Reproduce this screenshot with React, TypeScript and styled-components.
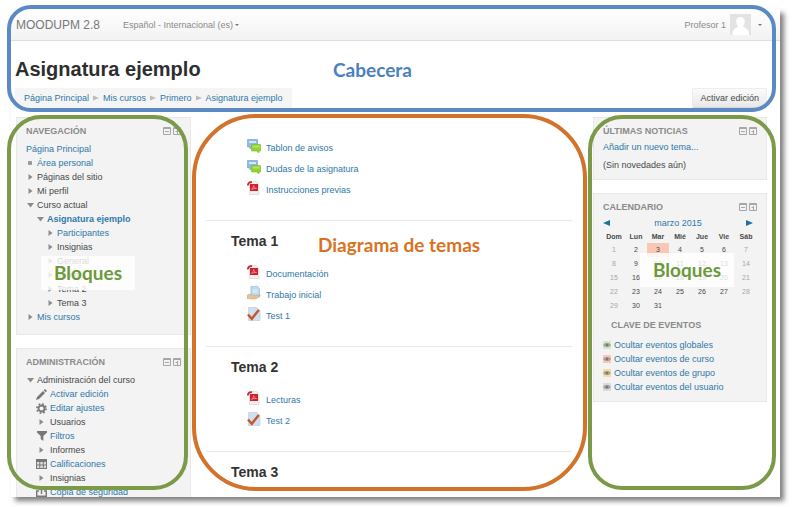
import React from "react";
import styled, { createGlobalStyle } from "styled-components";

const c = {
  link: "#2f78a8",
  text: "#484848",
  muted: "#8a8a8a",
  panel: "#f3f3f3",
  line: "#e8e8e8",
  blue: "#5b89c4",
  green: "#7a9a48",
  greenText: "#6b9a38",
  orange: "#d2722b",
};

const GlobalStyle = createGlobalStyle`
  *, *::before, *::after { box-sizing: border-box; }
  body {
    margin: 0;
    background: #fff;
    color: ${c.text};
    font: 9px/14px "Liberation Sans", Arial, sans-serif;
  }
  h1, h2, h3, p, ul, ol { margin: 0; padding: 0; }
  ul, ol { list-style: none; }
  a { color: ${c.link}; text-decoration: none; }
  button { font: inherit; color: inherit; border: 0; background: none; padding: 0; cursor: pointer; }
  svg { display: block; flex: none; }
`;

/* ---------- frame ---------- */

const Stage = styled.div`
  height: 100vh;
  padding: 9px 22px 10px 11px;
`;

const Frame = styled.div`
  position: relative;
  height: 100%;
  background: #fff;
  box-shadow: 4px 4px 5px rgba(0, 0, 0, 0.5);
`;

const Screen = styled.div`
  height: 100%;
  overflow: hidden;
`;

/* ---------- header ---------- */

const Navbar = styled.header`
  display: flex;
  align-items: center;
  gap: 23px;
  height: 32px;
  padding: 0 18px 0 5px;
  color: ${c.muted};
  background: linear-gradient(#fff, #f2f2f2);
  border-bottom: 1px solid #dedede;
`;

const Brand = styled.a`
  font-size: 12px;
  color: #777;
`;

const MenuButton = styled.button`
  display: flex;
  align-items: center;
  gap: 2px;
`;

const UserMenu = styled(MenuButton)`
  gap: 4px;
  margin-left: auto;
`;

const Caret = styled.span`
  border: 2px solid transparent;
  border-top-color: #777;
  border-bottom: 0;
  ${UserMenu} & { margin-left: 3px; }
`;

const PageHeader = styled.div`
  padding: 15px 13px 0 4px;
`;

const Title = styled.h1`
  font-size: 20px;
  line-height: 26px;
  color: #2e2e2e;
`;

const HeaderRow = styled.div`
  display: flex;
  align-items: center;
  justify-content: space-between;
  margin-top: 6px;
`;

const Crumbs = styled.ol`
  display: flex;
  gap: 4px;
  padding: 3px 9px;
  background: #f5f5f5;
`;

const Crumb = styled.li`
  display: flex;
  align-items: center;
  gap: 4px;
`;

const EditButton = styled.button`
  padding: 2px 7px;
  border: 1px solid #ededed;
  border-bottom-color: #d8d8d8;
  border-radius: 2px;
  background: linear-gradient(#fafafa, #e9e9e9);
`;

/* ---------- columns ---------- */

const Columns = styled.div`
  display: grid;
  grid-template-columns: 175px minmax(0, 1fr) 174px;
  gap: 15px 20px;
  padding: 9px 13px 0 5px;
`;

const Side = styled.aside`
  display: flex;
  flex-direction: column;
  gap: 13px;
  min-width: 0;
`;

const BlockBox = styled.section`
  padding: 6px 9px 7px;
  background: ${c.panel};
  border: 1px solid ${c.line};
`;

const BlockHead = styled.div`
  display: flex;
  align-items: center;
  justify-content: space-between;
  margin-bottom: 4px;
`;

const BlockTitle = styled.h2`
  font-size: 9px;
  line-height: 14px;
  color: ${c.muted};
  text-transform: uppercase;
`;

const Tools = styled.div`
  display: flex;
  gap: 2px;
`;

const TreeList = styled.ul`
  padding-bottom: 3px;
`;

const TreeRow = styled.li<{ $level: number; $bold?: boolean }>`
  display: flex;
  align-items: center;
  gap: 3px;
  height: 14px;
  padding-left: ${(p) => p.$level * 10}px;
  font-weight: ${(p) => (p.$bold ? "bold" : "normal")};
  white-space: nowrap;
`;

const Marker = styled.span<{ $wide?: boolean }>`
  display: flex;
  justify-content: center;
  width: ${(p) => (p.$wide ? 11 : 8)}px;
`;

const Main = styled.main`
  padding: 0 1px 0 0;
  margin-left: -5px;
`;

const Topic = styled.section`
  padding: 10px 25px 22px;
  border-bottom: 1px solid ${c.line};
`;

const TopicTitle = styled.h3`
  margin-bottom: 10px;
  font-size: 14px;
  line-height: 20px;
  color: #333;
`;

const Activities = styled.ul`
  padding-left: 16px;
  ${Topic}:first-child & { padding-top: 8px; }
`;

const Activity = styled.li`
  display: flex;
  align-items: center;
  height: 21px;
`;

const ActivityLink = styled.a`
  display: flex;
  align-items: center;
  gap: 5px;
`;

const ActivityName = styled.span`
  padding-top: 5px;
`;

/* ---------- news & calendar ---------- */

const News = styled.p`
  padding-top: 4px;
`;

const NewsLink = styled.a`
  display: block;
  margin-top: -2px;
`;

const MonthBar = styled.div`
  display: flex;
  align-items: center;
  justify-content: space-between;
  padding: 0 4px 0 0;
  margin-top: -2px;
`;

const CalendarTable = styled.table`
  width: 100%;
  table-layout: fixed;
  border-collapse: collapse;
  font-size: 7px;
  line-height: 14px;
  text-align: center;
`;

const DayName = styled.th`
  height: 13px;
  padding: 0;
  line-height: 12px;
`;

const Day = styled.td<{ $weekend: boolean; $today: boolean }>`
  height: 14px;
  padding: 0;
  color: ${(p) => (p.$weekend ? "#a6a6a6" : c.text)};
  background: ${(p) => (p.$today ? "#f9c8b4" : "transparent")};
`;

const KeyTitle = styled(BlockTitle)`
  margin: 5px 0 6px 8px;
`;

const KeyRow = styled.li`
  display: flex;
  align-items: center;
  gap: 3px;
`;

const KeyIcon = styled.span<{ $tone: string }>`
  display: flex;
  padding: 1px 0;
  background: ${(p) => p.$tone};
`;

/* ---------- annotations ---------- */

const Region = styled.div<{ $tone: string; $radius: number }>`
  position: absolute;
  border: 4px solid ${(p) => p.$tone};
  border-radius: ${(p) => p.$radius}px;
  pointer-events: none;
`;

const HeaderRegion = styled(Region)`
  top: -4px;
  left: -4px;
  right: 4px;
  height: 107px;
`;

const LeftRegion = styled(Region)`
  top: 106px;
  bottom: 7px;
  left: -4px;
  width: 181px;
`;

const MainRegion = styled(Region)`
  top: 105px;
  bottom: 6px;
  left: 181px;
  right: 193px;
`;

const RightRegion = styled(Region)`
  top: 106px;
  bottom: 7px;
  right: 4px;
  width: 188px;
`;

const Label = styled.span<{ $x: number; $y: number; $tone: string; $veil?: boolean }>`
  position: absolute;
  top: ${(p) => p.$y}px;
  left: ${(p) => p.$x}px;
  padding: 5px 13px;
  font: bold 19px/24px Lato, Carlito, sans-serif;
  color: ${(p) => p.$tone};
  background: ${(p) => (p.$veil ? "rgba(255, 255, 255, 0.8)" : "transparent")};
  white-space: nowrap;
`;

/* ---------- icons ---------- */

const MinusBox = () => (
  <svg width="8" height="8" viewBox="0 0 8 8" fill="none" stroke="#a6a6a6">
    <path d="M.5 .5h7v7h-7zM.5 1.5h7M2 4.5h4" />
  </svg>
);
const DockBox = () => (
  <svg width="8" height="8" viewBox="0 0 8 8" fill="none" stroke="#a6a6a6">
    <path d="M.5 .5h7v7h-7zM.5 1.5h7M4.5 3v4" />
    <path d="M2.5 4.5h2" />
  </svg>
);
const Closed = () => (
  <svg width="5" height="6" viewBox="0 0 5 6"><path d="M.5 0l4 3-4 3z" fill="#8c8c8c" /></svg>
);
const Open = () => (
  <svg width="7" height="5" viewBox="0 0 7 5"><path d="M0 0h7L3.500 4.500z" fill="#8c8c8c" /></svg>
);
const Dot = () => (
  <svg width="4" height="4" viewBox="0 0 4 4"><rect width="4" height="4" rx="1" fill="#999" /></svg>
);
const CrumbArrow = () => (
  <svg width="6" height="6" viewBox="0 0 6 6"><path d="M0 .5l6 2.500-6 2.500z" fill="#bbb" /></svg>
);
const Pencil = () => (
  <svg width="11" height="11" viewBox="0 0 11 11" fill="#777">
    <path d="M0 11l1-3L7 2l2 2-6 6zM7.700 1.300L9 0l2 2-1.300 1.300z" />
  </svg>
);
const Gear = () => (
  <svg width="11" height="11" viewBox="0 0 11 11" fill="none" stroke="#777">
    <circle cx="5.5" cy="5.5" r="3" strokeWidth="1.800" />
    <circle cx="5.5" cy="5.5" r="4.600" strokeWidth="1.600" strokeDasharray="1.800 1.813" />
  </svg>
);
const Funnel = () => (
  <svg width="10" height="10" viewBox="0 0 10 10"><path d="M0 0h10v1.500L6.300 5v5L3.700 8V5L0 1.500z" fill="#777" /></svg>
);
const Grid = () => (
  <svg width="11" height="10" viewBox="0 0 11 10">
    <path d="M0 0h11v10H0z" fill="#777" />
    <path d="M1 3h2.300v2.500H1zM4.300 3h2.500v2.500H4.300zM7.800 3H10v2.500H7.800zM1 6.500h2.300V9H1zM4.300 6.500h2.500V9H4.300zM7.800 6.500H10V9H7.800z" fill="#ddd" />
  </svg>
);
const Backup = () => (
  <svg width="11" height="10" viewBox="0 0 11 10" fill="none" stroke="#777" strokeWidth="1.400">
    <path d="M3 4H.7v5.300h9.600V4H8M5.500 7V1M3.500 3l2-2 2 2" />
  </svg>
);
const Forum = () => (
  <svg width="14" height="14" viewBox="0 0 14 14">
    <path d="M.5 .5h10v7.500H5L3 10V8H.5z" fill="#8dbbe3" stroke="#6d9fcd" strokeWidth=".6" />
    <path d="M2 2h7v2H2z" fill="#d3e7f7" />
    <path d="M4.500 5.500h9V12H12v1.800L9.500 12h-5z" fill="#92d42c" stroke="#78b822" strokeWidth=".6" />
    <path d="M5.500 6.500h7v2h-7z" fill="#b4e45e" />
  </svg>
);
const Pdf = () => (
  <svg width="14" height="14" viewBox="0 0 14 14">
    <path d="M2.500 .5h7L12 3v10.500H2.500z" fill="#f5eeee" stroke="#dccccc" strokeWidth=".6" />
    <path d="M3 3h8v7H3z" fill="#d3202f" />
    <path d="M4.500 8.300c1-1 2-2 2.200-3.700.4 1.800 1.200 2.700 2.700 2.900-1.700-.1-3.200.1-4.900.8z" fill="none" stroke="#f3a9ae" strokeWidth=".7" />
    <path d="M.8 4.500C1 2 2.500 1 5 1.200" fill="none" stroke="#c92a33" strokeWidth="1.800" />
  </svg>
);
const Assignment = () => (
  <svg width="14" height="14" viewBox="0 0 14 14">
    <path d="M4 0h6l2.500 2.500V11H4z" fill="#bcdaf0" stroke="#8db5d4" strokeWidth=".6" />
    <path d="M5.500 4h5M5.500 6h5" stroke="#e9f4fb" />
    <path d="M0 9.500c2-2 3.500-1.500 5.500-.5l3 .8 4.500-1c.8.700.2 1.300-.5 1.800L8.500 13H4L0 12.500z" fill="#e6c29c" stroke="#c99f75" strokeWidth=".5" />
  </svg>
);
const Quiz = () => (
  <svg width="14" height="14" viewBox="0 0 14 14">
    <path d="M1.500 .5H10L13 3.500v10H1.500z" fill="#cfe0f1" stroke="#b4cbe0" strokeWidth=".6" />
    <path d="M1 7.500l3.800 4.300L11.800 3" fill="none" stroke="#c4572b" strokeWidth="2.400" />
  </svg>
);
const Eye = () => (
  <svg width="8" height="6" viewBox="0 0 8 6">
    <path d="M0 3c2-3 6-3 8 0-2 3-6 3-8 0z" fill="#8b8b86" opacity=".7" />
    <circle cx="4" cy="3" r="1.200" fill="#777" />
  </svg>
);
const Avatar = () => (
  <svg width="21" height="21" viewBox="0 0 21 21">
    <path d="M0 0h21v21H0z" fill="#e3e3e3" />
    <path d="M10.500 3c3 0 4.500 2 4.300 5-.2 2-1 3-1.800 4 .2 2 4.500 1.500 6 6V21H2.500v-3c1.500-4.500 5.300-4 5.500-6-.8-1-1.700-2-1.800-4C6 5 7.500 3 10.500 3z" fill="#fff" />
  </svg>
);
const MonthArrow = ({ back }: { back?: boolean }) => (
  <svg width="7" height="6" viewBox="0 0 7 6"><path d={back ? "M7 0L0 3l7 3z" : "M0 0l7 3-7 3z"} fill="#1f70a3" /></svg>
);

/* ---------- data ---------- */

type Row = { label: string; level: number; icon: () => React.ReactElement; link?: boolean; bold?: boolean; wide?: boolean };

const navigation: Row[] = [
  { label: "Área personal", level: 0, icon: Dot, link: true },
  { label: "Páginas del sitio", level: 0, icon: Closed },
  { label: "Mi perfil", level: 0, icon: Closed },
  { label: "Curso actual", level: 0, icon: Open },
  { label: "Asignatura ejemplo", level: 1, icon: Open, link: true, bold: true },
  { label: "Participantes", level: 2, icon: Closed, link: true },
  { label: "Insignias", level: 2, icon: Closed },
  { label: "General", level: 2, icon: Closed },
  { label: "Tema 1", level: 2, icon: Closed },
  { label: "Tema 2", level: 2, icon: Closed },
  { label: "Tema 3", level: 2, icon: Closed },
  { label: "Mis cursos", level: 0, icon: Closed, link: true },
];

const administration: Row[] = [
  { label: "Administración del curso", level: 0, icon: Open },
  { label: "Activar edición", level: 1, icon: Pencil, link: true, wide: true },
  { label: "Editar ajustes", level: 1, icon: Gear, link: true, wide: true },
  { label: "Usuarios", level: 1, icon: Closed, wide: true },
  { label: "Filtros", level: 1, icon: Funnel, link: true, wide: true },
  { label: "Informes", level: 1, icon: Closed, wide: true },
  { label: "Calificaciones", level: 1, icon: Grid, link: true, wide: true },
  { label: "Insignias", level: 1, icon: Closed, wide: true },
  { label: "Copia de seguridad", level: 1, icon: Backup, link: true, wide: true },
];

const topics: { title: string; items: [string, () => React.ReactElement][] }[] = [
  { title: "", items: [["Tablon de avisos", Forum], ["Dudas de la asignatura", Forum], ["Instrucciones previas", Pdf]] },
  { title: "Tema 1", items: [["Documentación", Pdf], ["Trabajo inicial", Assignment], ["Test 1", Quiz]] },
  { title: "Tema 2", items: [["Lecturas", Pdf], ["Test 2", Quiz]] },
  { title: "Tema 3", items: [] },
];

const weekDays = ["Dom", "Lun", "Mar", "Mié", "Jue", "Vie", "Sáb"];
const weeks = [0, 1, 2, 3, 4].map((w) => weekDays.map((_, d) => w * 7 + d + 1));

const eventKeys = [
  ["Ocultar eventos globales", "#cfeac6"],
  ["Ocultar eventos de curso", "#f9c8b4"],
  ["Ocultar eventos de grupo", "#f8dfa0"],
  ["Ocultar eventos del usuario", "#d9dcdf"],
];

/* ---------- components ---------- */

const Block = ({ title, children }: { title: string; children: React.ReactNode }) => (
  <BlockBox>
    <BlockHead>
      <BlockTitle>{title}</BlockTitle>
      <Tools>
        <button aria-label={`Minimizar ${title}`}><MinusBox /></button>
        <button aria-label={`Acoplar ${title}`}><DockBox /></button>
      </Tools>
    </BlockHead>
    {children}
  </BlockBox>
);

const Tree = ({ rows }: { rows: Row[] }) => (
  <TreeList>
    {rows.map(({ label, level, icon: Icon, link, bold, wide }) => (
      <TreeRow key={label} $level={level} $bold={bold}>
        <Marker $wide={wide}><Icon /></Marker>
        {link ? <a href="#">{label}</a> : <span>{label}</span>}
      </TreeRow>
    ))}
  </TreeList>
);

const Calendar = () => (
  <>
    <MonthBar>
      <a href="#" aria-label="Mes anterior"><MonthArrow back /></a>
      <a href="#">marzo 2015</a>
      <a href="#" aria-label="Mes siguiente"><MonthArrow /></a>
    </MonthBar>
    <CalendarTable>
      <thead>
        <tr>{weekDays.map((d) => <DayName key={d} scope="col">{d}</DayName>)}</tr>
      </thead>
      <tbody>
        {weeks.map((week) => (
          <tr key={week[0]}>
            {week.map((day, i) => (
              <Day key={day} $weekend={i === 0 || i === 6} $today={day === 3}>{day <= 31 ? day : ""}</Day>
            ))}
          </tr>
        ))}
      </tbody>
    </CalendarTable>
    <KeyTitle as="h3">Clave de eventos</KeyTitle>
    <ul>
      {eventKeys.map(([label, tone]) => (
        <KeyRow key={label}>
          <KeyIcon $tone={tone}><Eye /></KeyIcon>
          <a href="#">{label}</a>
        </KeyRow>
      ))}
    </ul>
  </>
);

export default function App() {
  return (
    <>
      <GlobalStyle />
      <Stage>
        <Frame>
          <Screen>
            <Navbar>
              <Brand href="#">MOODUPM 2.8</Brand>
              <MenuButton>Español - Internacional (es)<Caret /></MenuButton>
              <UserMenu>Profesor 1<Avatar /><Caret /></UserMenu>
            </Navbar>
            <PageHeader>
              <Title>Asignatura ejemplo</Title>
              <HeaderRow>
                <Crumbs>
                  {["Página Principal", "Mis cursos", "Primero", "Asignatura ejemplo"].map((name, i) => (
                    <Crumb key={name}>{i > 0 && <CrumbArrow />}<a href="#">{name}</a></Crumb>
                  ))}
                </Crumbs>
                <EditButton>Activar edición</EditButton>
              </HeaderRow>
            </PageHeader>
            <Columns>
              <Side>
                <Block title="Navegación">
                  <a href="#">Página Principal</a>
                  <Tree rows={navigation} />
                </Block>
                <Block title="Administración">
                  <Tree rows={administration} />
                </Block>
              </Side>
              <Main>
                {topics.map(({ title, items }) => (
                  <Topic key={title}>
                    {title && <TopicTitle>{title}</TopicTitle>}
                    <Activities>
                      {items.map(([name, Icon]) => (
                        <Activity key={name}>
                          <ActivityLink href="#"><Icon /><ActivityName>{name}</ActivityName></ActivityLink>
                        </Activity>
                      ))}
                    </Activities>
                  </Topic>
                ))}
              </Main>
              <Side>
                <Block title="Últimas noticias">
                  <NewsLink href="#">Añadir un nuevo tema...</NewsLink>
                  <News>(Sin novedades aún)</News>
                </Block>
                <Block title="Calendario"><Calendar /></Block>
              </Side>
            </Columns>
          </Screen>
          <HeaderRegion $tone={c.blue} $radius={24}>
            <Label $x={309} $y={44} $tone="#4a80c0">Cabecera</Label>
          </HeaderRegion>
          <LeftRegion $tone={c.green} $radius={34}>
            <Label $x={30} $y={137} $tone={c.greenText} $veil>Bloques</Label>
          </LeftRegion>
          <MainRegion $tone={c.orange} $radius={64}>
            <Label $x={109} $y={110} $tone="#d9721f">Diagrama de temas</Label>
          </MainRegion>
          <RightRegion $tone={c.green} $radius={34}>
            <Label $x={48} $y={134} $tone={c.greenText} $veil>Bloques</Label>
          </RightRegion>
        </Frame>
      </Stage>
    </>
  );
}
